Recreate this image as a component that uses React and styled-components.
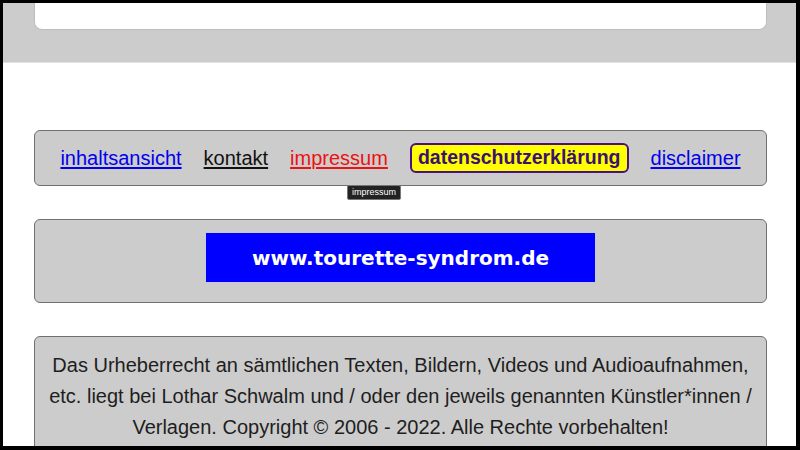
import React from "react";
import styled, { createGlobalStyle } from "styled-components";

const GlobalStyle = createGlobalStyle`
  * { box-sizing: border-box; }
  body {
    margin: 0;
    background: #000;
    font-family: "Liberation Sans", Arial, sans-serif;
  }
`;

const links = [
  { text: "inhaltsansicht", color: "#0000ee" },
  { text: "kontakt", color: "#111111" },
  { text: "impressum", color: "#ee1111" },
  { text: "datenschutzerklärung", badge: true },
  { text: "disclaimer", color: "#0000ee" },
];

export default function App() {
  return (
    <>
      <GlobalStyle />
      <Frame>
        <Header>
          <HeaderCard />
        </Header>
        <Main>
          <NavBox>
            {links.map((l) =>
              l.badge ? (
                <Badge key={l.text} href="#">
                  {l.text}
                </Badge>
              ) : (
                <NavLink key={l.text} href="#" $color={l.color}>
                  {l.text}
                </NavLink>
              )
            )}
            <Tooltip>impressum</Tooltip>
          </NavBox>
          <BannerBox>
            <Banner>www.tourette-syndrom.de</Banner>
          </BannerBox>
          <CopyBox>
            Das Urheberrecht an sämtlichen Texten, Bildern, Videos und
            Audioaufnahmen, etc. liegt bei Lothar Schwalm und / oder den jeweils
            genannten Künstler*innen / Verlagen. Copyright © 2006 - 2022. Alle
            Rechte vorbehalten!
          </CopyBox>
        </Main>
      </Frame>
    </>
  );
}

const Frame = styled.div`
  width: 800px;
  height: 450px;
  border-style: solid;
  border-color: #000;
  border-width: 3px 4px 4px 3px;
  background: #fff;
  overflow: hidden;
  display: flex;
  flex-direction: column;
`;

const Header = styled.div`
  flex: none;
  height: 60px;
  background: #cccccc;
  border-bottom: 1px solid #e2e2e2;
  padding: 0 29px 0 31px;
`;

const HeaderCard = styled.div`
  height: 27px;
  background: #fff;
  border: 1px solid #bdbdbd;
  border-top: none;
  border-radius: 0 0 8px 8px;
`;

const Main = styled.div`
  padding: 67px 29px 0 31px;
  display: flex;
  flex-direction: column;
  gap: 33px;
`;

const Box = styled.div`
  background: #cccccc;
  border: 1.5px solid #707070;
  border-radius: 6px;
`;

const NavBox = styled(Box)`
  position: relative;
  height: 56px;
  display: flex;
  align-items: center;
  justify-content: center;
  gap: 22px;
  font-size: 20px;
`;

const NavLink = styled.a`
  color: ${(p) => p.$color};
  text-decoration: underline;
  text-underline-offset: 2px;
`;

const Badge = styled.a`
  font-weight: bold;
  font-size: 19.5px;
  color: #3a1170;
  text-decoration: none;
  background: #ffff00;
  border: 2px solid #4b0f82;
  border-radius: 6px;
  padding: 1px 6px 2px;
  line-height: 23px;
`;

const Tooltip = styled.div`
  position: absolute;
  left: 312px;
  top: 54px;
  background: #222;
  color: #fff;
  border: 1px solid #777;
  border-radius: 2px;
  font-size: 9px;
  line-height: 13px;
  padding: 0 4px;
`;

const BannerBox = styled(Box)`
  height: 84px;
  padding-top: 12px;
  display: flex;
  justify-content: center;
  align-items: flex-start;
`;

const Banner = styled.div`
  width: 391px;
  height: 51px;
  background: #0000ff;
  border: 1px solid #c8c8d8;
  color: #fff;
  font-family: "DejaVu Sans", Verdana, sans-serif;
  font-weight: bold;
  font-size: 20px;
  display: flex;
  align-items: center;
  justify-content: center;
`;

const CopyBox = styled(Box)`
  padding: 13px 14px 20px;
  text-align: center;
  color: #1e1e1e;
  font-size: 20px;
  line-height: 31px;
`;
